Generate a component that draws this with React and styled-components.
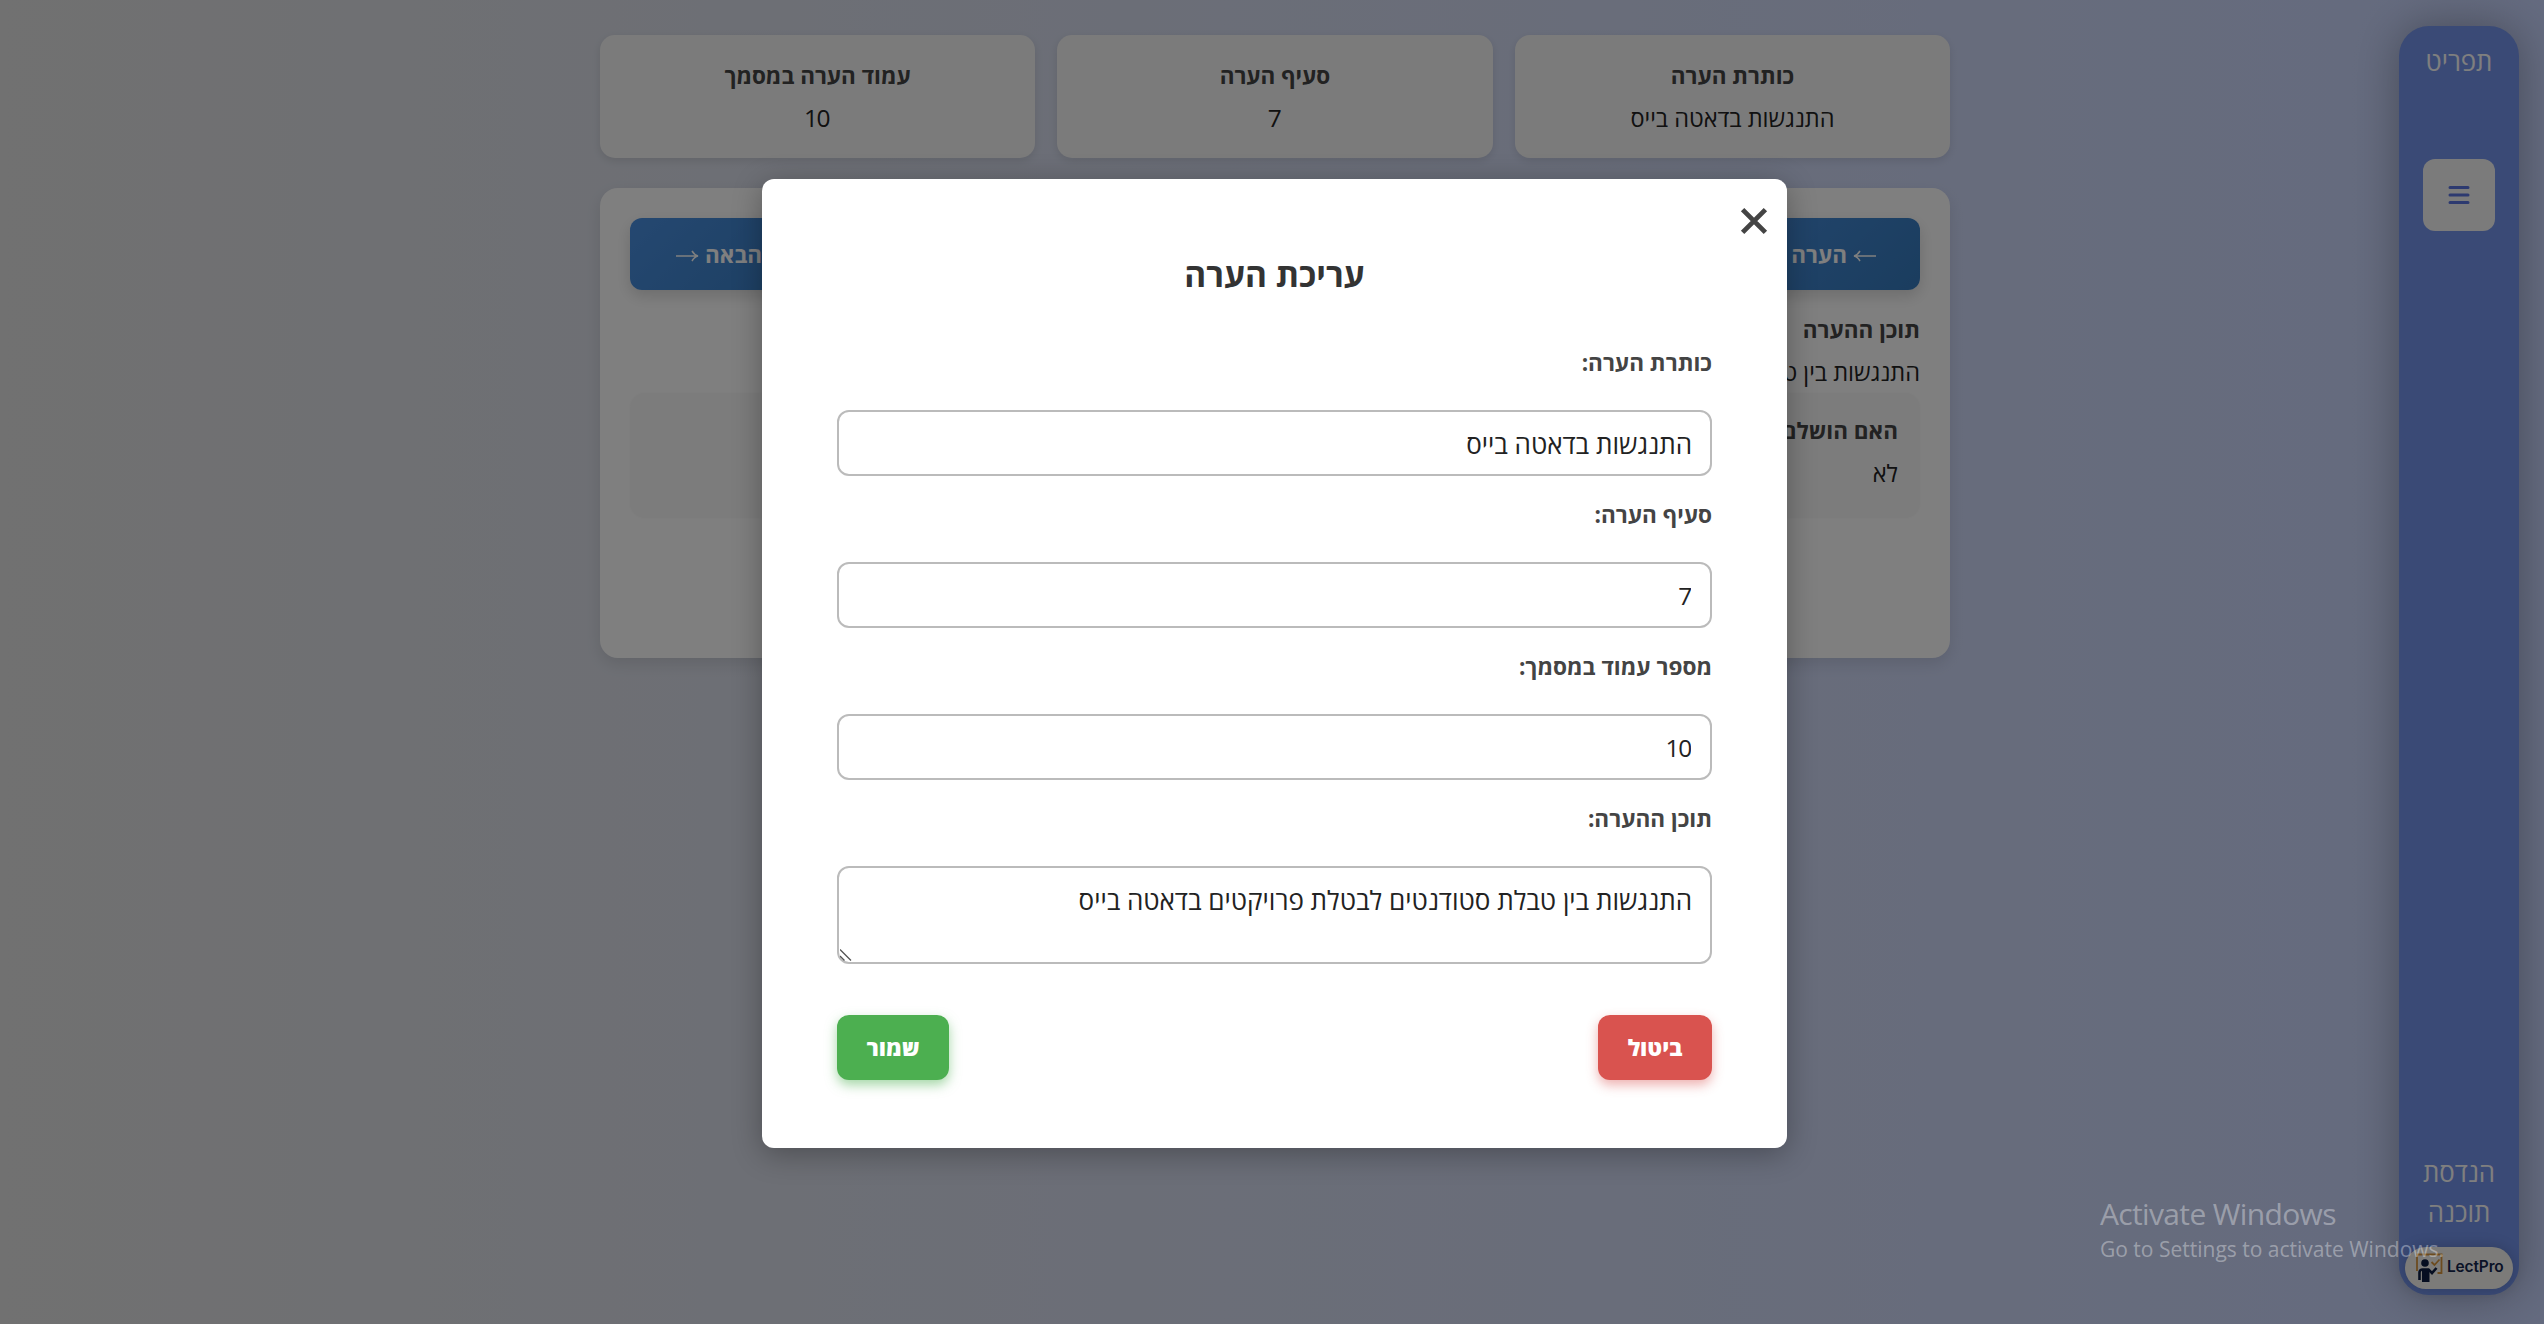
import React from 'react';
import styled, { createGlobalStyle } from 'styled-components';

const Global = createGlobalStyle`
  * { box-sizing: border-box; }
  html, body { margin: 0; padding: 0; }
  body { width: 2544px; height: 1324px; overflow: hidden; font-family: 'Open Sans', 'Noto Sans', sans-serif; font-size: 24px; }
  h1, h2, h3, p { margin: 0; }
  button, input, textarea { font-family: inherit; }
`;

const Page = styled.div`
  direction: rtl;
  position: relative;
  width: 2544px;
  height: 1324px;
  overflow: hidden;
  display: flex;
  justify-content: space-between;
  background: linear-gradient(to left, #c9d6ff, #e2e2e2);
`;

const Sidebar = styled.aside`
  width: 120px;
  height: 1269px;
  margin: 26px 25px 0 0;
  padding: 15px 6px 6px;
  border-radius: 30px;
  background: #7494ec;
  box-shadow: 0 0 45px rgba(0, 0, 0, 0.3);
  display: flex;
  flex-direction: column;
  align-items: center;
`;

const SideText = styled.div`
  color: #fff;
  font-size: 25.8px;
  font-weight: 500;
  line-height: 40px;
  text-align: center;
`;

const MenuButton = styled.button`
  width: 72px;
  height: 72px;
  margin: 78px 0 auto;
  padding: 0;
  border: 0;
  border-radius: 12px;
  background: #f6f6f6;
  display: flex;
  align-items: center;
  justify-content: center;
`;

const LogoPill = styled.div`
  width: 108px;
  height: 42px;
  margin-top: 15px;
  border-radius: 21px;
  background: #f9f7f2;
  box-shadow: 0 0 15px rgba(0, 0, 0, 0.2);
  display: flex;
  align-items: center;
  padding-left: 10px;
  direction: ltr;
`;

const LogoText = styled.span`
  font: 600 15.4px Inter, sans-serif;
  letter-spacing: -0.1px;
  color: #14264e;
  margin: -3px 0 0 3px;
`;

const Main = styled.main`
  width: 1350px;
  margin-right: auto;
  margin-left: 600px;
  padding-top: 35px;
  flex: none;
`;

const InfoRow = styled.div`
  display: grid;
  grid-template-columns: repeat(3, 1fr);
  gap: 22.4px;
`;

const InfoCard = styled.section`
  height: 123px;
  padding: 20px 0;
  border-radius: 15px;
  background: #f7f7f7;
  box-shadow: 0 3px 8px rgba(0, 0, 0, 0.1);
  text-align: center;
`;

const Heading = styled.h3`
  font-size: 22.5px;
  line-height: 42px;
  font-weight: 700;
  color: #444;
`;

const Value = styled.p`
  font-size: ${(p) => (p.$numeric ? 24.5 : 23.5)}px;
  letter-spacing: ${(p) => (p.$numeric ? '-1.5px' : 'normal')};
  padding-right: ${(p) => (p.$numeric ? 2 : 0)}px;
  line-height: 42px;
  color: #222;
`;

const NoteCard = styled.section`
  margin-top: 30px;
  height: 470px;
  padding: 30px;
  border-radius: 18px;
  background: #fff;
  box-shadow: 0 6px 15px rgba(0, 0, 0, 0.1);
`;

const NavRow = styled.div`
  display: flex;
  justify-content: space-between;
  margin-bottom: 19px;
`;

const NavButton = styled.button`
  height: 72px;
  padding: 0 44px 0 46px;
  border: 0;
  border-radius: 12px;
  background: linear-gradient(135deg, #4a90e2, #357abd);
  box-shadow: 0 6px 15px rgba(0, 0, 0, 0.15);
  color: #fff;
  font-size: 22.5px;
  font-weight: 700;
  display: flex;
  align-items: center;
  gap: 6px;

  svg {
    margin-top: 4px;
  }
`;

const StatusBox = styled.div`
  height: 125px;
  padding: 17px 22px;
  border-radius: 15px;
  background: #f9f9f9;
  box-shadow: 0 0 3px rgba(0, 0, 0, 0.04);
`;

const Overlay = styled.div`
  position: absolute;
  inset: 0;
  padding: 179px 757px 0 0;
  background: rgba(0, 0, 0, 0.5);
`;

const Modal = styled.form`
  position: relative;
  width: 1025px;
  height: 969px;
  padding: 70px 75px 0;
  border-radius: 12px;
  background: #fff;
  box-shadow: 0 6px 30px rgba(0, 0, 0, 0.3);
`;

const CloseButton = styled.button`
  position: absolute;
  top: 27px;
  right: 18px;
  width: 30px;
  height: 30px;
  padding: 0;
  border: 0;
  background: none;
  display: flex;
  align-items: center;
  justify-content: center;
`;

const Title = styled.h2`
  margin-bottom: 45px;
  font-size: 33.4px;
  line-height: 50px;
  font-weight: 700;
  color: #333;
  text-align: center;
`;

const Field = styled.label`
  display: block;
  position: relative;
  margin-bottom: 20px;
`;

const FieldName = styled.span`
  display: block;
  height: 66px;
  padding-top: 2px;
  font-size: 22.6px;
  line-height: 34px;
  font-weight: 700;
  color: #444;
`;

const Input = styled.input`
  display: block;
  width: 875px;
  height: 66px;
  padding: ${(p) => (p.$numeric ? '1px 19px 0' : '2px 18px 0')};
  border: 2px solid #bbb;
  border-radius: 12px;
  outline: 0;
  background: #fff;
  color: #222;
  font-size: ${(p) => (p.$numeric ? 24.5 : 26)}px;
  letter-spacing: ${(p) => (p.$numeric ? '-1.2px' : 'normal')};
`;

const TextArea = styled(Input).attrs({ as: 'textarea' })`
  height: 98px;
  padding: 16px 18px;
  line-height: 33px;
  resize: none;
`;

const ResizeGrip = styled.svg`
  position: absolute;
  left: 3px;
  bottom: 3px;
`;

const Actions = styled.div`
  display: flex;
  justify-content: space-between;
  margin-top: 51px;
`;

const ActionButton = styled.button`
  width: ${(p) => p.$width}px;
  height: 65px;
  padding: 0;
  border: 0;
  border-radius: 12px;
  background: ${(p) => p.$color};
  box-shadow: 0 5px 12px ${(p) => p.$shadow};
  color: #fff;
  font-size: 22.5px;
  font-weight: 800;
`;

const Watermark = styled.div`
  position: absolute;
  left: 2100px;
  top: 1191px;
  direction: ltr;
  color: rgba(255, 255, 255, 0.36);
  white-space: nowrap;
`;

const WatermarkTitle = styled.div`
  font-size: 30px;
  letter-spacing: -0.65px;
  line-height: 46px;
`;

const WatermarkText = styled.div`
  font-size: 21px;
  line-height: 25px;
`;

const CardInfo = ({ title, value, numeric }) => (
  <InfoCard>
    <Heading>{title}</Heading>
    <Value $numeric={numeric}>{value}</Value>
  </InfoCard>
);

const Arrow = ({ left }) => (
  <svg width="23" height="12" viewBox="0 0 23 12" fill="none" stroke="#fff" strokeWidth="1.5">
    {left ? <path d="M23 6H2M7 1C5.500 3.500 3.500 5.500 1 6c2.500 .5 4.500 2.500 6 5" /> : <path d="M0 6h21M16 1c1.500 2.500 3.500 4.500 6 5-2.500 .5-4.500 2.500-6 5" />}
  </svg>
);

const LogoMark = () => (
  <svg width="29" height="30" viewBox="0 0 29 30">
    <path d="M2 18V1.500h24.500v18.500h-4" fill="none" stroke="#d9973f" strokeWidth="1.800" />
    <path d="M16.500 9l3 3 5-5.500" fill="none" stroke="#d9973f" strokeWidth="1.800" />
    <circle cx="10" cy="10" r="3.800" fill="#0c1d42" />
    <path d="M4.500 27v-7.500c0-2 1.500-3 3-3h6l3.500 3.500 4.500-5" fill="none" stroke="#0c1d42" strokeWidth="2.600" />
    <path d="M7 16h7.500v13H7z" fill="#0c1d42" />
  </svg>
);

export default function App() {
  return (
    <>
      <Global />
      <Page>
        <Sidebar>
          <SideText>תפריט</SideText>
          <MenuButton type="button">
            <svg width="22" height="20" viewBox="0 0 22 20" stroke="#5a74e0" strokeWidth="3" strokeLinecap="round">
              <path d="M2 2.500h18M2 10h18M2 17.500h18" />
            </svg>
          </MenuButton>
          <SideText>הנדסת</SideText>
          <SideText>תוכנה</SideText>
          <LogoPill>
            <LogoMark />
            <LogoText>LectPro</LogoText>
          </LogoPill>
        </Sidebar>
        <Main>
          <InfoRow>
            <CardInfo title="כותרת הערה" value="התנגשות בדאטה בייס" />
            <CardInfo title="סעיף הערה" value="7" numeric />
            <CardInfo title="עמוד הערה במסמך" value="10" numeric />
          </InfoRow>
          <NoteCard>
            <NavRow>
              <NavButton type="button"><Arrow left />הערה קודמת</NavButton>
              <NavButton type="button">הערה הבאה<Arrow /></NavButton>
            </NavRow>
            <Heading>תוכן ההערה</Heading>
            <Value>התנגשות בין טבלת סטודנטים לבטלת פרויקטים בדאטה בייס</Value>
            <StatusBox>
              <Heading>האם הושלם</Heading>
              <Value>לא</Value>
            </StatusBox>
          </NoteCard>
        </Main>
        <Overlay>
          <Modal>
            <CloseButton type="button">
              <svg width="28" height="28" viewBox="0 0 28 28" stroke="#444" strokeWidth="4.800">
                <path d="M2.600 2.600l22.800 22.800M25.400 2.600L2.600 25.400" />
              </svg>
            </CloseButton>
            <Title>עריכת הערה</Title>
            <Field><FieldName>כותרת הערה:</FieldName><Input defaultValue="התנגשות בדאטה בייס" /></Field>
            <Field><FieldName>סעיף הערה:</FieldName><Input $numeric defaultValue="7" /></Field>
            <Field><FieldName>מספר עמוד במסמך:</FieldName><Input $numeric defaultValue="10" /></Field>
            <Field>
              <FieldName>תוכן ההערה:</FieldName>
              <TextArea defaultValue="התנגשות בין טבלת סטודנטים לבטלת פרויקטים בדאטה בייס" />
              <ResizeGrip width="12" height="12" viewBox="0 0 12 12" stroke="#555" strokeWidth="1.300">
                <path d="M0 .5l11 11M0 7l4.500 4.500" />
              </ResizeGrip>
            </Field>
            <Actions>
              <ActionButton type="button" $width={114} $color="#d9534f" $shadow="rgba(217,83,79,.45)">ביטול</ActionButton>
              <ActionButton type="button" $width={112} $color="#4caf50" $shadow="rgba(76,175,80,.5)">שמור</ActionButton>
            </Actions>
          </Modal>
        </Overlay>
        <Watermark>
          <WatermarkTitle>Activate Windows</WatermarkTitle>
          <WatermarkText>Go to Settings to activate Windows.</WatermarkText>
        </Watermark>
      </Page>
    </>
  );
}
